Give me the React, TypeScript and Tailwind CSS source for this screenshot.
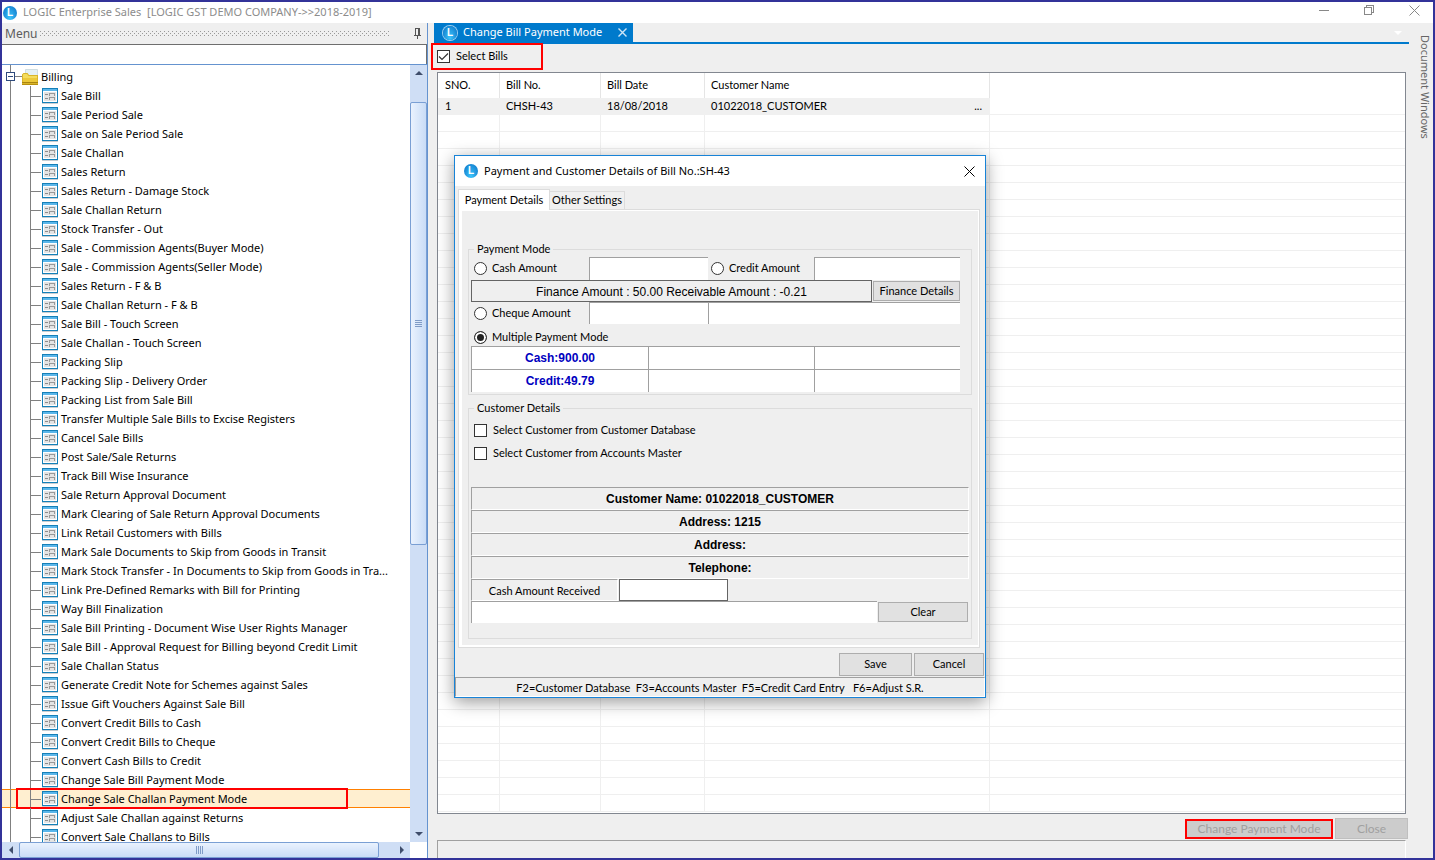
import React from "react";

const uiFont = "font-['Noto_Sans','Open_Sans',sans-serif]";
const formFont = "font-[Lato,'Liberation_Sans',sans-serif]";
const wideFont = "font-['Liberation_Sans',Arial,sans-serif]";

const menuItems = [
  "Sale Bill",
  "Sale Period Sale",
  "Sale on Sale Period Sale",
  "Sale Challan",
  "Sales Return",
  "Sales Return - Damage Stock",
  "Sale Challan Return",
  "Stock Transfer - Out",
  "Sale - Commission Agents(Buyer Mode)",
  "Sale - Commission Agents(Seller Mode)",
  "Sales Return - F & B",
  "Sale Challan Return - F & B",
  "Sale Bill - Touch Screen",
  "Sale Challan - Touch Screen",
  "Packing Slip",
  "Packing Slip - Delivery Order",
  "Packing List from Sale Bill",
  "Transfer Multiple Sale Bills to Excise Registers",
  "Cancel Sale Bills",
  "Post Sale/Sale Returns",
  "Track Bill Wise Insurance",
  "Sale Return Approval Document",
  "Mark Clearing of Sale Return Approval Documents",
  "Link Retail Customers with Bills",
  "Mark Sale Documents to Skip from Goods in Transit",
  "Mark Stock Transfer - In Documents to Skip from Goods in Tra...",
  "Link Pre-Defined Remarks with Bill for Printing",
  "Way Bill Finalization",
  "Sale Bill Printing - Document Wise User Rights Manager",
  "Sale Bill - Approval Request for Billing beyond Credit Limit",
  "Sale Challan Status",
  "Generate Credit Note for Schemes against Sales",
  "Issue Gift Vouchers Against Sale Bill",
  "Convert Credit Bills to Cash",
  "Convert Credit Bills to Cheque",
  "Convert Cash Bills to Credit",
  "Change Sale Bill Payment Mode",
  "Change Sale Challan Payment Mode",
  "Adjust Sale Challan against Returns",
  "Convert Sale Challans to Bills",
];
const selectedItem = "Change Sale Challan Payment Mode";
const emptyRows = Array.from({ length: 41 }, (_, i) => i);

function Logo({ outlined = false }: { outlined?: boolean }) {
  return (
    <span
      aria-hidden="true"
      className={`flex h-[14px] w-[14px] shrink-0 items-center justify-center rounded-full bg-radial-[at_50%_85%] from-[#3cc4fb] to-[#0b72c6] text-[10px] leading-none font-bold text-white ${wideFont} ${
        outlined ? "ring-1 ring-[#9fd0f0]" : ""
      }`}
    >
      L
    </span>
  );
}

function FormIcon() {
  return (
    <svg width="16" height="16" viewBox="0 0 16 16" className="shrink-0" shapeRendering="crispEdges" aria-hidden="true">
      <rect x="0" y="0" width="16" height="15" fill="#1580b8" />
      <rect x="1" y="1" width="14" height="13" fill="#fff" />
      <rect x="1" y="1" width="14" height="2" fill="#5ab6ea" />
      <rect x="2" y="4" width="12" height="9" fill="#e4e4e4" />
      <path d="M3 6.500h3M3 10.500h3" stroke="#8c8c8c" />
      <path d="M7.500 8V5.500h5V8M7.500 12V9.500h5V12" stroke="#999" fill="none" />
      <rect x="0" y="15" width="16" height="1" fill="#c9ced2" />
    </svg>
  );
}

function FolderIcon() {
  return (
    <svg width="16" height="16" viewBox="0 0 16 16" className="shrink-0" aria-hidden="true">
      <path d="M3.500.5h12v10h-12z" fill="#e4f0f4" stroke="#cfdde2" />
      <path d="M0 5.500 1.500 4h4L7 6h9v10H0z" fill="#d9b52a" />
      <path d="M1 5.500 2 5h3l1.500 2H15v5H1z" fill="#f4dc5c" />
      <path d="M1 9h14v4H1z" fill="#ecc93a" />
      <path d="M0 13.500h16" stroke="#a98410" />
      <path d="M0 15.500h16" stroke="#b8900f" />
    </svg>
  );
}

function Arrow({ d }: { d: string }) {
  return (
    <svg width="8" height="8" viewBox="0 0 8 8" aria-hidden="true">
      <path d={d} fill="#3f4d6b" />
    </svg>
  );
}

function Sidebar() {
  return (
    <aside className={`flex w-[426px] shrink-0 flex-col border-r border-[#6593cf] bg-white ${uiFont}`}>
      <header className="flex h-[21px] shrink-0 items-center bg-[#efefef] pl-[3px] text-[12px] text-[#5c5c5c]">
        <span>Menu</span>
        <svg className="ml-[3px] h-[5px] w-[350px]" aria-hidden="true">
          <defs>
            <pattern id="grip" width="4" height="4" patternUnits="userSpaceOnUse">
              <rect width="1" height="1" fill="#999" />
              <rect x="2" y="2" width="1" height="1" fill="#999" />
            </pattern>
          </defs>
          <rect width="350" height="5" fill="url(#grip)" />
        </svg>
        <button aria-label="Pin menu" className="mr-[5px] ml-auto">
          <svg width="9" height="11" viewBox="0 0 9 11" shapeRendering="crispEdges" aria-hidden="true">
            <path d="M2.500 7V.5h4V7M1 7.500h7M4.500 7v4M5.500 1v6" stroke="#555" fill="none" />
          </svg>
        </button>
      </header>
      <input aria-label="Search menu" className="h-5 w-full shrink-0 border-t border-r border-[#6e6e6e] px-1 text-[11px] outline-none" />
      <div className="flex min-h-0 grow border-t border-[#6593cf]">
        <nav className="flex min-w-0 grow flex-col overflow-hidden pt-0.5 text-[11px] whitespace-nowrap text-black">
          <div className="relative flex h-[19px] shrink-0 items-center pt-px pl-5">
            <span className="absolute top-[-2px] bottom-0 left-2 w-px bg-[#808080]" />
            <span className="absolute top-[9px] left-[9px] h-px w-[11px] bg-[#808080]" />
            <button
              aria-label="Collapse Billing"
              className="absolute top-[5px] left-1 flex h-[9px] w-[9px] items-center justify-center border border-[#2e4a7d] bg-white"
            >
              <span className="h-px w-[5px] bg-[#2e4a7d]" />
            </button>
            <FolderIcon />
            <a href="#billing" className="ml-[3px]">Billing</a>
          </div>
          <ul>
            {menuItems.map((item) => {
              const selected = item === selectedItem;
              return (
                <li
                  key={item}
                  className={`relative flex h-[19px] items-center border-y pl-10 ${
                    selected ? "border-[#ff8000] bg-[#ffefd0]" : "border-transparent"
                  }`}
                >
                  <span className="absolute -inset-y-px left-2 w-px bg-[#808080]" />
                  <span className="absolute -inset-y-px left-7 w-px bg-[#808080]" />
                  <span className="absolute top-[9px] left-7 h-px w-[11px] bg-[#808080]" />
                  <FormIcon />
                  <a href="#item" className="ml-[3px] leading-[17px]">{item}</a>
                  {selected && <span className="absolute -inset-y-0.5 left-3.5 w-[332px] border-2 border-[#f00]" />}
                </li>
              );
            })}
          </ul>
        </nav>
        <div className="flex w-[17px] shrink-0 flex-col bg-[#cfdef5]">
          <button aria-label="Scroll up" className="flex h-4 items-center justify-center">
            <Arrow d="M0 6 4 2l4 4z" />
          </button>
          <span className="grow-[21]" />
          <span className="flex grow-[443] items-center justify-center rounded-xs border border-[#7a9fd4] bg-linear-to-r from-[#eaf2fe] to-[#c9dcf6]">
            <span className="h-[7px] w-[7px] bg-[repeating-linear-gradient(to_bottom,#7f9bc6_0_1px,transparent_1px_2px)]" />
          </span>
          <span className="grow-[287]" />
          <button aria-label="Scroll down" className="flex h-4 items-center justify-center">
            <Arrow d="M0 2h8L4 6z" />
          </button>
        </div>
      </div>
      <div className="mr-[17px] flex h-4 shrink-0 bg-[#cfdef5]">
        <button aria-label="Scroll left" className="flex w-[17px] items-center justify-center">
          <Arrow d="M6 0v8L2 4z" />
        </button>
        <span className="flex grow-[360] items-center justify-center rounded-xs border border-[#7a9fd4] bg-linear-to-b from-[#eaf2fe] to-[#c9dcf6]">
          <span className="h-2 w-[7px] bg-[repeating-linear-gradient(to_right,#7f9bc6_0_1px,transparent_1px_2px)]" />
        </span>
        <span className="grow-[14]" />
        <button aria-label="Scroll right" className="flex w-[17px] items-center justify-center">
          <Arrow d="M2 0v8l4-4z" />
        </button>
      </div>
    </aside>
  );
}

function BillsTable() {
  return (
    <div className="min-h-0 grow overflow-hidden border border-[#828790] bg-white">
      <table className="w-full table-fixed border-separate border-spacing-0 text-left text-[11px] text-black">
        <colgroup>
          <col className="w-[62px]" />
          <col className="w-[101px]" />
          <col className="w-[104px]" />
          <col className="w-[285px]" />
          <col />
        </colgroup>
        <thead>
          <tr className="h-[25px]">
            <th className="border-r border-[#e5e5e5] pl-[7px] font-normal">SNO.</th>
            <th className="border-r border-[#e5e5e5] pl-[6px] font-normal">Bill No.</th>
            <th className="border-r border-[#e5e5e5] pl-[6px] font-normal">Bill Date</th>
            <th className="border-r border-[#e5e5e5] pl-[6px] font-normal">Customer Name</th>
            <th />
          </tr>
        </thead>
        <tbody>
          <tr className="h-[17px] leading-4">
            <td className="border-b border-[#f0f0f0] bg-[#f0f0f0] pl-[7px]">1</td>
            <td className="border-b border-[#f0f0f0] bg-[#f0f0f0] pl-[6px]">CHSH-43</td>
            <td className="border-b border-[#f0f0f0] bg-[#f0f0f0] pl-[6px]">18/08/2018</td>
            <td className="border-b border-[#f0f0f0] bg-[#f0f0f0] pr-2 pl-[6px]">
              <span className="flex justify-between">
                <span>01022018_CUSTOMER</span>
                <span>...</span>
              </span>
            </td>
            <td className="border-b border-[#f0f0f0]" />
          </tr>
          {emptyRows.map((row) => (
            <tr key={row} className="h-[17px]">
              <td className="border-r border-b border-[#efefef]" />
              <td className="border-r border-b border-[#efefef]" />
              <td className="border-r border-b border-[#efefef]" />
              <td className="border-r border-b border-[#efefef]" />
              <td className="border-b border-[#efefef]" />
            </tr>
          ))}
        </tbody>
      </table>
    </div>
  );
}

const field = "min-w-0 border-t border-l border-[#a0a0a0] bg-white px-1 outline-none";
const push = "border border-[#adadad] bg-[#e1e1e1] text-center";
const radio =
  "h-[13px] w-[13px] shrink-0 appearance-none rounded-full border border-[#333] bg-white checked:bg-[#222] checked:shadow-[inset_0_0_0_2px_#fff]";
const check = "h-[13px] w-[13px] shrink-0 appearance-none border border-[#333] bg-white";

function PaymentDialog() {
  return (
    <section
      role="dialog"
      aria-labelledby="dialog-title"
      className={`absolute top-[153px] left-[452px] flex w-[532px] flex-col border border-[#1883d7] bg-[#efefef] text-[11px] text-black shadow-[0_4px_16px_rgba(0,0,0,0.4)] ${formFont}`}
    >
      <header className="flex h-[30px] items-center bg-white pr-2.5 pl-[9px]">
        <Logo />
        <h2 id="dialog-title" className={`ml-1.5 text-[11px] ${uiFont}`}>
          Payment and Customer Details of Bill No.:SH-43
        </h2>
        <button aria-label="Close dialog" className="ml-auto">
          <svg width="11" height="11" viewBox="0 0 11 11" aria-hidden="true">
            <path d="m.5.5 10 10m0-10-10 10" stroke="#000" />
          </svg>
        </button>
      </header>
      <div role="tablist" className="flex h-[23px] items-end pl-[3px]">
        <button role="tab" aria-selected="true" className="relative z-10 -mb-px h-[21px] w-[92px] border border-b-0 border-[#dcdcdc] bg-white">
          Payment Details
        </button>
        <button role="tab" aria-selected="false" className="h-[18px] w-[75px] border border-b-0 border-l-0 border-[#dcdcdc] bg-[#f0f0f0]">
          Other Settings
        </button>
      </div>
      <div className="mr-[5px] ml-[3px] flex flex-col border border-[#dcdcdc] bg-white pt-px pr-px pb-0.5 pl-[3px]">
        <div className="flex flex-col bg-[#efefef] pt-[30px] pr-[6px] pb-1.5 pl-1.5">
          <fieldset className="min-w-0 border border-[#dcdcdc] pr-[11px] pb-0.5 pl-0.5">
            <legend className="ml-[3px] h-4 px-[3px] leading-4">Payment Mode</legend>
            <div className="flex h-[23px] items-stretch">
              <label className="flex w-[118px] shrink-0 items-center gap-[5px] pl-[3px]">
                <input type="radio" name="mode" className={radio} />
                Cash Amount
              </label>
              <input aria-label="Cash Amount value" className={`${field} w-[119px] shrink-0`} />
              <label className="flex w-[106px] shrink-0 items-center gap-[5px] pl-[3px]">
                <input type="radio" name="mode" className={radio} />
                Credit Amount
              </label>
              <input aria-label="Credit Amount value" className={`${field} w-0 grow`} />
            </div>
            <div className="flex h-[22px] items-center gap-px">
              <output className={`h-[22px] grow border border-[#646464] pt-px text-center text-[12px] leading-[20px] ${wideFont}`}>
                Finance Amount : 50.00 Receivable Amount : -0.21
              </output>
              <button className={`${push} h-5 w-[87px] shrink-0`}>Finance Details</button>
            </div>
            <div className="flex h-[22px] items-stretch">
              <label className="flex w-[118px] shrink-0 items-center gap-[5px] pl-[3px]">
                <input type="radio" name="mode" className={radio} />
                Cheque Amount
              </label>
              <input aria-label="Cheque Amount value" className={`${field} w-[119px] shrink-0`} />
              <input aria-label="Cheque details" className={`${field} w-0 grow`} />
            </div>
            <label className="flex h-[22px] items-center gap-[5px] pt-1 pl-[3px]">
              <input type="radio" name="mode" defaultChecked className={radio} />
              Multiple Payment Mode
            </label>
            <div
              className={`grid grid-cols-[177px_166px_1fr] bg-white text-center text-[12px] leading-[22px] font-bold text-[#0000c0] ${wideFont}`}
            >
              <div className="h-[23px] border-t border-l border-[#a0a0a0]">Cash:900.00</div>
              <div className="border-t border-l border-[#a0a0a0]" />
              <div className="border-t border-l border-[#a0a0a0]" />
              <div className="h-[23px] border-t border-l border-[#a0a0a0]">Credit:49.79</div>
              <div className="border-t border-l border-[#a0a0a0]" />
              <div className="border-t border-l border-[#a0a0a0]" />
            </div>
          </fieldset>
          <fieldset className="mt-[5px] min-w-0 border border-[#dcdcdc] pr-0.5 pb-[15px] pl-0.5">
            <legend className="ml-[3px] h-4 px-[3px] leading-4">Customer Details</legend>
            <div className="flex flex-col gap-2.5 pt-2 pb-[27px] pl-[3px]">
              <label className="flex h-[13px] items-center gap-1.5">
                <input type="checkbox" className={check} />
                Select Customer from Customer Database
              </label>
              <label className="flex h-[13px] items-center gap-1.5">
                <input type="checkbox" className={check} />
                Select Customer from Accounts Master
              </label>
            </div>
            <div className={`text-center text-[12px] leading-[22px] font-bold ${wideFont}`}>
              <p className="h-[23px] border border-[#a0a0a0] border-r-white border-b-white">Customer Name: 01022018_CUSTOMER</p>
              <p className="h-[23px] border border-[#a0a0a0] border-r-white border-b-white">Address: 1215</p>
              <p className="h-[23px] border border-[#a0a0a0] border-r-white border-b-white">Address:</p>
              <p className="h-[23px] border border-[#a0a0a0] border-r-white border-b-white">Telephone:</p>
            </div>
            <div className="flex h-[22px]">
              <label
                htmlFor="cash-received"
                className="mr-px w-[147px] border border-[#a0a0a0] border-r-white border-b-white text-center leading-[22px]"
              >
                Cash Amount Received
              </label>
              <input id="cash-received" className="w-[109px] border border-[#646464] bg-white px-1 outline-none" />
            </div>
            <div className="flex h-[22px] items-center gap-px">
              <input aria-label="Remarks" className={`${field} h-[22px] grow`} />
              <button className={`${push} mr-px h-5 w-[90px]`}>Clear</button>
            </div>
          </fieldset>
        </div>
      </div>
      <div className="flex justify-end gap-0.5 pt-[5px] pr-px pb-px">
        <button className={`${push} h-[23px] w-[73px]`}>Save</button>
        <button className={`${push} h-[23px] w-[70px]`}>Cancel</button>
      </div>
      <footer className="h-5 border border-[#a0a0a0] border-r-white border-b-white text-center leading-[20px] whitespace-pre">
        {"F2=Customer Database  F3=Accounts Master  F5=Credit Card Entry   F6=Adjust S.R."}
      </footer>
    </section>
  );
}

export default function App() {
  return (
    <div className="relative flex h-screen min-h-[720px] flex-col overflow-hidden border-2 border-[#333399] bg-[#efefef]">
      <header className={`flex h-[21px] shrink-0 items-center bg-white pl-px text-[11px] text-[#8c8c8c] ${uiFont}`}>
        <Logo />
        <h1 className="ml-[6px] whitespace-pre">{"LOGIC Enterprise Sales  [LOGIC GST DEMO COMPANY->>2018-2019]"}</h1>
        <div className="mr-[13px] ml-auto flex items-center gap-[34px] pb-1">
          <button aria-label="Minimize">
            <svg width="11" height="11" viewBox="0 0 11 11" shapeRendering="crispEdges" aria-hidden="true">
              <path d="M0 5.500h10" stroke="#888" />
            </svg>
          </button>
          <button aria-label="Restore">
            <svg width="11" height="11" viewBox="0 0 11 11" shapeRendering="crispEdges" aria-hidden="true">
              <path d="M.5 2.500h7v7h-7zM2.500 2V.5h7v7H8" stroke="#888" fill="none" />
            </svg>
          </button>
          <button aria-label="Close">
            <svg width="11" height="11" viewBox="0 0 11 11" aria-hidden="true">
              <path d="m.5.5 10 10m0-10-10 10" stroke="#888" />
            </svg>
          </button>
        </div>
      </header>
      <div className="flex min-h-0 grow">
        <Sidebar />
        <main className={`ml-1.5 flex min-w-0 grow flex-col ${formFont}`}>
          <div className="flex h-[21px] shrink-0 items-center justify-between border-b-2 border-[#007acc]">
            <div className={`flex h-[19px] items-center bg-[#007acc] pr-1.5 pl-[9px] text-[11px] text-white ${uiFont}`}>
              <Logo outlined />
              <span className="ml-1.5">Change Bill Payment Mode</span>
              <button aria-label="Close tab" className="ml-4">
                <svg width="9" height="9" viewBox="0 0 9 9" aria-hidden="true">
                  <path d="m.5.5 8 8m0-8-8 8" stroke="#cfe6f7" strokeWidth="1.400" />
                </svg>
              </button>
            </div>
            <button aria-label="Open documents" className="mr-[7px]">
              <svg width="8" height="4" viewBox="0 0 8 4" aria-hidden="true">
                <path d="M0 0h8L4 4z" fill="#fff" />
              </svg>
            </button>
          </div>
          <div className="flex h-7 shrink-0 items-start pl-[3px]">
            <label className="relative flex h-6 items-center gap-1.5 text-[11px] text-black">
              <span className="relative flex">
                <input type="checkbox" defaultChecked className={check} />
                <svg className="pointer-events-none absolute top-0 left-0" width="13" height="13" viewBox="0 0 13 13" aria-hidden="true">
                  <path d="m2 6.500 3 3 6-6" stroke="#333" strokeWidth="1.200" fill="none" />
                </svg>
              </span>
              Select Bills
              <span className="absolute -top-px -left-1.5 h-[27px] w-[112px] border-2 border-[#f00]" />
            </label>
          </div>
          <div className="mr-[3px] ml-[3px] flex min-h-0 grow flex-col">
            <BillsTable />
          </div>
          <div className="flex h-[26px] shrink-0 items-center justify-end gap-0.5 pt-1 pr-px pb-px text-[12px] text-[#a0a0a0]">
            <button disabled className="h-5 w-[148px] border-2 border-[#f00] bg-[#ccc] leading-4">
              Change Payment Mode
            </button>
            <button disabled className="h-[21px] w-[73px] border border-[#bfbfbf] bg-[#ccc]">
              Close
            </button>
          </div>
          <footer className="mr-[3px] ml-[3px] h-[18px] shrink-0 border-t border-r border-l border-[#a0a0a0] border-r-white" />
        </main>
        <aside className={`flex w-6 shrink-0 justify-end pt-3 text-[11px] text-[#666] ${uiFont}`}>
          <button className="h-max leading-4 [writing-mode:vertical-rl]">Document Windows</button>
        </aside>
      </div>
      <PaymentDialog />
    </div>
  );
}
